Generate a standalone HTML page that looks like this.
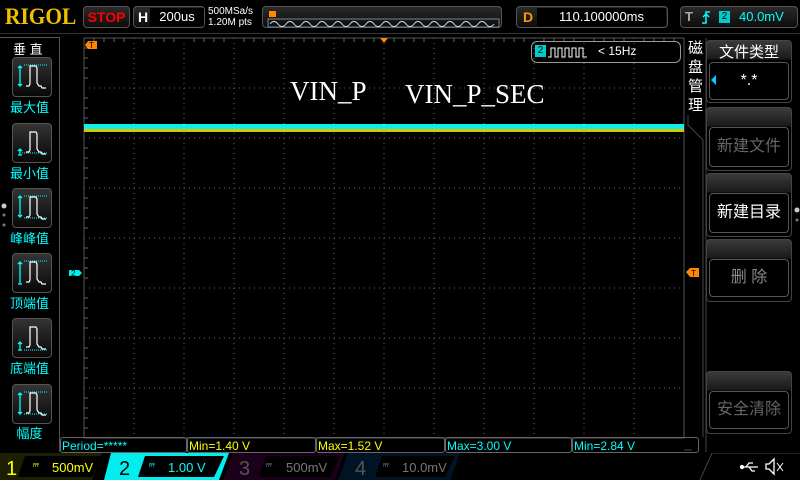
<!DOCTYPE html><html><head><meta charset="utf-8"><style>
*{margin:0;padding:0;box-sizing:border-box}
body{width:800px;height:480px;background:#000;overflow:hidden;position:relative;font-family:"Liberation Sans","Noto Sans CJK SC",sans-serif;color:#fff}
.a{position:absolute}
.box{position:absolute;border:1px solid #555;border-radius:4px;background:linear-gradient(#2a2a2a,#0c0c0c)}
.lb{position:absolute;left:0;width:59px;text-align:center;color:#0ff;font-size:13px}
.ib{position:absolute;left:12px;width:40px;height:40px;border:1px solid #555;border-radius:4px;background:linear-gradient(#333,#080808)}
.rb{position:absolute;left:706px;width:86px;border:1px solid #444;border-radius:4px;background:linear-gradient(#3a3a3a 0,#1a1a1a 18px,#000 19px)}
.rb .in{position:absolute;left:2px;right:2px;border:1px solid #555;border-radius:4px;text-align:center;font-size:16px;color:#666}
.ms{position:absolute;top:437px;height:16px;border:1px solid #666;border-radius:3px;font-size:12px;line-height:16px;padding-left:1px}
</style></head><body>
<div class="a" style="left:5px;top:4px;font-family:'Liberation Serif',serif;font-weight:bold;font-size:23px;color:#f0c000;transform:scaleX(0.93);transform-origin:left">RIGOL</div>
<div class="box" style="left:83px;top:6px;width:47px;height:22px;color:#f00;font-weight:bold;font-size:14px;text-align:center;line-height:20px">STOP</div>
<div class="box" style="left:133px;top:6px;width:72px;height:22px"><span class="a" style="left:4px;top:2px;font-weight:bold;font-size:14px">H</span><div class="a" style="left:16px;top:1px;width:54px;height:18px;background:#000;text-align:center;font-size:13px;line-height:18px">200us</div></div>
<div class="a" style="left:208px;top:6px;font-size:10px;line-height:11px">500MSa/s<br>1.20M pts</div>
<div class="box" style="left:262px;top:6px;width:240px;height:22px">
<svg class="a" style="left:2px;top:1px" width="236" height="20"><path d="M4 3h7v6h-7z" fill="#f80"/><rect x="3" y="11" width="231" height="8" fill="none" stroke="#789"/><path d="M5 16 q4 -5 8 0 t8 0 t8 0 t8 0 t8 0 t8 0 t8 0 t8 0 t8 0 t8 0 t8 0 t8 0 t8 0 t8 0 t8 0 t8 0 t8 0 t8 0 t8 0 t8 0 t8 0 t8 0 t8 0 t8 0 t8 0 t8 0 t8 0 t8 0" fill="none" stroke="#ddd"/></svg></div>
<div class="box" style="left:516px;top:6px;width:152px;height:22px"><span class="a" style="left:6px;top:2px;font-weight:bold;font-size:14px;color:#f90">D</span><div class="a" style="left:20px;top:1px;width:129px;height:18px;background:#000;text-align:center;font-size:13px;line-height:18px">110.100000ms</div></div>
<div class="box" style="left:680px;top:6px;width:118px;height:22px;font-size:13px;line-height:20px"><span class="a" style="left:4px;top:0;font-weight:bold;color:#aaa">T</span><svg class="a" style="left:20px;top:4px" width="10" height="13"><path d="M1 12h4V1h4M2 6l3-3 3 3" fill="none" stroke="#0ff" stroke-width="1.5"/></svg><span class="a" style="left:38px;top:4px;width:11px;height:12px;background:#0cc;color:#000;font-size:10px;line-height:12px;text-align:center">2</span><span class="a" style="left:58px;color:#0ff">40.0mV</span></div>
<div class="a" style="left:0;top:33px;width:800px;height:1px;background:#333"></div>
<div class="a" style="left:0;top:37px;width:60px;height:415px;border-right:1px solid #555;border-top:1px solid #555"></div>
<div class="a" style="left:13px;top:39px;font-size:13px">垂 直</div>
<div class="ib" style="top:57px"></div><div class="lb" style="top:97px">最大值</div>
<div class="ib" style="top:123px"></div><div class="lb" style="top:163px">最小值</div>
<div class="ib" style="top:188px"></div><div class="lb" style="top:228px">峰峰值</div>
<div class="ib" style="top:253px"></div><div class="lb" style="top:293px">顶端值</div>
<div class="ib" style="top:318px"></div><div class="lb" style="top:358px">底端值</div>
<div class="ib" style="top:384px"></div><div class="lb" style="top:423px">幅度</div>
<svg class="a" style="left:0;top:0" width="800" height="480">
<defs><path id="p" d="M14 29h3l1-2V9h6l1 2v15l2 3h2l1 2h4" fill="none" stroke="#fff" stroke-width="1.2"/></defs>
<g transform="translate(12,57)"><use href="#p"/><path d="M8 9v20M6 11l2-2 2 2M6 27l2 2 2-2" stroke="#0ff" fill="none" stroke-width="1.3"/><path d="M12 8h23" stroke="#0ff" stroke-dasharray="1 1"/></g>
<g transform="translate(12,123)"><use href="#p"/><path d="M8 26v6M6 28l2-2 2 2M6 32h4" stroke="#0ff" fill="none" stroke-width="1.3"/><path d="M10 30h25" stroke="#0ff" stroke-dasharray="1 1"/></g>
<g transform="translate(12,188)"><use href="#p"/><path d="M8 8v21M6 10l2-2 2 2M6 27l2 2 2-2" stroke="#0ff" fill="none" stroke-width="1.3"/><path d="M12 8h23M12 30h23" stroke="#0ff" stroke-dasharray="1 1"/></g>
<g transform="translate(12,253)"><use href="#p"/><path d="M8 9v22M6 11l2-2 2 2M6 31h4" stroke="#0ff" fill="none" stroke-width="1.3"/><path d="M12 8h23" stroke="#0ff" stroke-dasharray="1 1"/></g>
<g transform="translate(12,318)"><use href="#p"/><path d="M8 24v8M6 26l2-2 2 2M6 32h4" stroke="#0ff" fill="none" stroke-width="1.3"/><path d="M12 32h23" stroke="#0ff" stroke-dasharray="1 1"/></g>
<g transform="translate(12,384)"><use href="#p"/><path d="M8 9v21M6 11l2-2 2 2M6 28l2 2 2-2" stroke="#0ff" fill="none" stroke-width="1.3"/><path d="M12 8h23M12 30h23" stroke="#0ff" stroke-dasharray="1 1"/></g>
<circle cx="4" cy="206" r="2.5" fill="#ccc"/><circle cx="4" cy="215" r="1.5" fill="#777"/><circle cx="4" cy="225" r="1.5" fill="#777"/>
<circle cx="797" cy="210" r="2.5" fill="#ccc"/><circle cx="797" cy="220" r="1.5" fill="#777"/>
<g stroke="#666" stroke-dasharray="1 4">
<path d="M134 38V438M184 38V438M234 38V438M284 38V438M334 38V438M434 38V438M484 38V438M534 38V438M584 38V438M634 38V438M384 38V438"/>
<path d="M84 88H684M84 138H684M84 188H684M84 288H684M84 338H684M84 388H684M84 238H684"/>
</g>
<path d="M84 38V438M84 38H684M684 38V438M84 438H684" stroke="#555"/>
<g stroke="#666"><path d="M84 48h4M84 58h4M84 68h4M84 78h4M84 98h4M84 108h4M84 118h4M84 128h4M84 148h4M84 158h4M84 168h4M84 178h4M84 198h4M84 208h4M84 218h4M84 228h4M84 248h4M84 258h4M84 268h4M84 278h4M84 298h4M84 308h4M84 318h4M84 328h4M84 348h4M84 358h4M84 368h4M84 378h4M84 398h4M84 408h4M84 418h4M84 428h4"/>
<path d="M94 38v4M104 38v4M114 38v4M124 38v4M144 38v4M154 38v4M164 38v4M174 38v4M194 38v4M204 38v4M214 38v4M224 38v4M244 38v4M254 38v4M264 38v4M274 38v4M294 38v4M304 38v4M314 38v4M324 38v4M344 38v4M354 38v4M364 38v4M374 38v4M394 38v4M404 38v4M414 38v4M424 38v4M444 38v4M454 38v4M464 38v4M474 38v4M494 38v4M504 38v4M514 38v4M524 38v4M544 38v4M554 38v4M564 38v4M574 38v4M594 38v4M604 38v4M614 38v4M624 38v4M644 38v4M654 38v4M664 38v4M674 38v4"/></g>
<rect x="84" y="124" width="600" height="5" fill="#1ee"/>
<rect x="84" y="129" width="600" height="3" fill="#cc0"/>
<path d="M85 45l3-4h9v8h-9z" fill="#f80"/><text x="89" y="48" font-size="8" fill="#000" font-family="Liberation Sans">T</text>
<path d="M380 38h8l-4 5z" fill="#f80"/>
<path d="M69 270h10l3 3-3 3h-10z" fill="#0ee"/><text x="71" y="276" font-size="8" fill="#000" font-family="Liberation Sans">2</text>
<path d="M686 272l4-4h9v9h-9z" fill="#f80"/><text x="691" y="276" font-size="8" fill="#000" font-family="Liberation Sans">T</text>
<path d="M706 38V437M684 450h8M706 437v15" stroke="#444"/>
<path d="M688 115v10l15 15v297" stroke="#444" fill="none"/>
</svg>
<div class="a" style="left:531px;top:41px;width:150px;height:22px;border:1px solid #999;border-radius:6px;font-size:12px;line-height:18px"><span class="a" style="left:3px;top:3px;width:11px;height:12px;background:#0cc;color:#000;font-size:10px;line-height:12px;text-align:center">2</span><svg class="a" style="left:16px;top:4px" width="42" height="12"><path d="M0 11h3V2h4v9h3V2h4v9h3V2h4v9h3V2h4v9h3V2h4v9h4" fill="none" stroke="#fff"/></svg><span class="a" style="left:66px">&lt; 15Hz</span></div>
<div class="a" style="left:290px;top:76px;font-family:'Liberation Serif',serif;font-size:27px">VIN_P</div>
<div class="a" style="left:405px;top:79px;font-family:'Liberation Serif',serif;font-size:27px">VIN_P_SEC</div>
<div class="a" style="left:688px;top:39px;width:18px;font-size:15px;line-height:19px">磁盘管理</div>
<div class="rb" style="top:40px;height:63px"><div class="a" style="left:0;right:0;top:0;text-align:center;font-size:15px">文件类型</div><div class="in" style="top:21px;height:38px;color:#fff;line-height:36px">*.*</div></div>
<div class="a" style="left:711px;top:75px;width:0;height:0;border:5px solid transparent;border-right:5px solid #0cf;border-left:0"></div>
<div class="rb" style="top:107px;height:64px"><div class="in" style="top:19px;height:40px;line-height:38px">新建文件</div></div>
<div class="rb" style="top:173px;height:64px"><div class="in" style="top:19px;height:40px;line-height:38px;color:#fff">新建目录</div></div>
<div class="rb" style="top:239px;height:63px"><div class="in" style="top:19px;height:38px;line-height:36px;color:#888">删 除</div></div>
<div class="rb" style="top:371px;height:63px"><div class="in" style="top:19px;height:38px;line-height:36px">安全清除</div></div>
<div class="ms" style="left:60px;width:127px;color:#0ff">Period=*****</div>
<div class="ms" style="left:187px;width:129px;color:#ff0">Min=1.40 V</div>
<div class="ms" style="left:316px;width:129px;color:#ff0">Max=1.52 V</div>
<div class="ms" style="left:445px;width:127px;color:#0ff">Max=3.00 V</div>
<div class="ms" style="left:572px;width:127px;color:#0ff">Min=2.84 V</div>
<svg class="a" style="left:0;top:453px" width="800" height="27">
<path d="M0 0H102L92 27H0z" fill="#1e1e00"/><path d="M25 3H102L92 24H18z" fill="#000"/>
<path d="M111 0H229L219 27H104z" fill="#0ee"/><path d="M145 3H224L214 24H138z" fill="#000"/>
<path d="M233 0H345L335 27H223z" fill="#1a0018"/><path d="M266 3H340L330 24H259z" fill="#000"/>
<path d="M348 0H460L450 27H338z" fill="#001426"/><path d="M382 3H455L445 24H375z" fill="#000"/>
<path d="M700 27L712 0H800" stroke="#444" fill="none"/>
<g font-family="Liberation Sans" font-size="13">
<text x="6" y="22" font-size="20" fill="#ff0">1</text><path d="M33 11h6M33 13h1M35 13h1M37 13h1" stroke="#ff0"/><text x="52" y="19" fill="#ff0">500mV</text>
<text x="119" y="22" font-size="20" fill="#000">2</text><path d="M149 11h6M149 13h1M151 13h1M153 13h1" stroke="#0ff"/><text x="168" y="19" fill="#0ff">1.00 V</text>
<text x="239" y="22" font-size="20" fill="#555">3</text><path d="M266 11h6M266 13h1M268 13h1M270 13h1" stroke="#777"/><text x="286" y="19" fill="#777">500mV</text>
<text x="355" y="22" font-size="20" fill="#555">4</text><path d="M383 11h6M383 13h1M385 13h1M387 13h1" stroke="#777"/><text x="402" y="19" fill="#777">10.0mV</text>
</g>
<g stroke="#fff" fill="none" stroke-width="1.3"><path d="M742 14h16M746 14l3-4h4M749 14l3 4h3M742 14"/><circle cx="742" cy="14" r="1.5" fill="#fff"/><path d="M766 11h3l5-5v15l-5-5h-3z"/><path d="M777 10l6 8M783 10l-6 8" stroke-width="1"/></g>
</svg>
</body></html>
